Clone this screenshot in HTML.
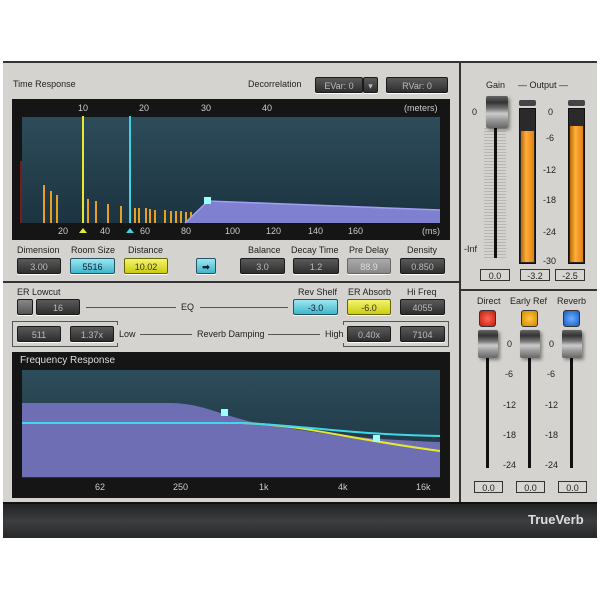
<!DOCTYPE html>
<html><head><meta charset="utf-8"><style>
body{margin:0;width:600px;height:600px;background:#fff;position:relative;overflow:hidden;font-family:"Liberation Sans",sans-serif;}
.a{position:absolute}
.t{position:absolute;font-size:9px;color:#222;white-space:nowrap}
.b{position:absolute;height:16px;border-radius:2px;background:linear-gradient(#5a5a5a,#2e2e2e);border:1px solid #1a1a1a;color:#bbb;font-size:9px;text-align:center;line-height:16px;box-sizing:border-box;box-shadow:0 1px 0 #fff}
.cy{background:linear-gradient(#9ee6f2,#3fb6cc);color:#123;border-color:#256}
.ye{background:linear-gradient(#f4f470,#cccc10);color:#332;border-color:#660}
.gr{background:linear-gradient(#aaa,#888);color:#ddd;border-color:#666}
.v{position:absolute;height:12px;border:1px solid #333;background:#d8d6d2;font-size:9px;text-align:center;line-height:12px;box-sizing:border-box;color:#222}
.ln{position:absolute;height:1px;background:#555}
.sc{position:absolute;font-size:9px;color:#222}
.knob{position:absolute;width:20px;height:28px;border-radius:2px;background:linear-gradient(#666 0,#333 20%,#777 40%,#ccc 55%,#999 75%,#666 100%);box-shadow:2px 2px 3px rgba(0,0,0,.4)}
.trk{position:absolute;width:3px;background:#111}
</style></head><body>
<div class="a" style="left:3px;top:61px;width:594px;height:477px;background:#d5d3cf;border-top:2px solid #333;box-sizing:border-box"></div>
<div class="a" style="left:459px;top:61px;width:2px;height:443px;background:#333"></div>
<div class="a" style="left:3px;top:281px;width:456px;height:2px;background:#333"></div>
<div class="a" style="left:461px;top:289px;width:136px;height:2px;background:#333"></div>
<div class="a" style="left:3px;top:502px;width:594px;height:36px;background:linear-gradient(#222,#3c3e40 50%,#26282a);border-top:2px solid #111;box-sizing:border-box"></div>
<div class="a" style="left:528px;top:512px;font-size:13px;font-weight:bold;color:#ddd">TrueVerb</div>

<div class="t" style="left:13px;top:79px">Time Response</div>
<div class="t" style="left:248px;top:79px">Decorrelation</div>
<div class="b" style="left:315px;top:77px;width:48px">EVar: 0</div>
<div class="b" style="left:363px;top:77px;width:15px">▾</div>
<div class="b" style="left:386px;top:77px;width:62px">RVar: 0</div>

<svg class="a" style="left:12px;top:99px" width="438" height="141">
<rect width="438" height="141" fill="#151515"/>
<defs><linearGradient id="g1" x1="0" y1="0" x2="0" y2="1"><stop offset="0" stop-color="#2d4c5a"/><stop offset="1" stop-color="#1c3340"/></linearGradient></defs>
<rect x="10" y="18" width="418" height="106" fill="url(#g1)"/>
<rect x="8" y="62" width="2" height="62" fill="#7a1a1a"/>
<g fill="#e8a020">
<rect x="31" y="86" width="2" height="38"/><rect x="38" y="92" width="2" height="32"/><rect x="44" y="96" width="2" height="28"/><rect x="75" y="100" width="2" height="24"/><rect x="83" y="102" width="2" height="22"/><rect x="95" y="105" width="2" height="19"/><rect x="108" y="107" width="2" height="17"/><rect x="122" y="109" width="2" height="15"/><rect x="126" y="109" width="2" height="15"/><rect x="133" y="109" width="2" height="15"/><rect x="137" y="110" width="2" height="14"/><rect x="142" y="111" width="2" height="13"/><rect x="152" y="111" width="2" height="13"/><rect x="158" y="112" width="2" height="12"/><rect x="163" y="112" width="2" height="12"/><rect x="168" y="112" width="2" height="12"/><rect x="173" y="113" width="2" height="11"/><rect x="178" y="113" width="2" height="11"/></g>
<rect x="70" y="17" width="2" height="107" fill="#e8e830"/>
<rect x="117" y="17" width="2" height="107" fill="#40d0e0"/>
<polygon points="173,124 196,102 428,111 428,124" fill="#8080d0"/>
<polyline points="173,124 196,102 428,111" fill="none" stroke="#a0a0f0" stroke-width="1.5"/>
<rect x="192" y="98" width="7" height="7" fill="#9ff"/>
<g fill="#ccc" font-size="9" font-family="Liberation Sans">
<text x="66" y="12">10</text><text x="127" y="12">20</text><text x="189" y="12">30</text><text x="250" y="12">40</text><text x="392" y="12">(meters)</text>
<text x="46" y="135">20</text><text x="88" y="135">40</text><text x="128" y="135">60</text><text x="169" y="135">80</text><text x="213" y="135">100</text><text x="254" y="135">120</text><text x="296" y="135">140</text><text x="336" y="135">160</text><text x="410" y="135">(ms)</text></g>
<polygon points="67,134 71,129 75,134" fill="#e8e830"/><polygon points="114,134 118,129 122,134" fill="#40d0e0"/>
</svg>

<div class="t" style="left:17px;top:245px">Dimension</div>
<div class="t" style="left:71px;top:245px">Room Size</div>
<div class="t" style="left:128px;top:245px">Distance</div>
<div class="t" style="left:248px;top:245px">Balance</div>
<div class="t" style="left:291px;top:245px">Decay Time</div>
<div class="t" style="left:349px;top:245px">Pre Delay</div>
<div class="t" style="left:407px;top:245px">Density</div>
<div class="b" style="left:17px;top:258px;width:44px">3.00</div>
<div class="b cy" style="left:70px;top:258px;width:45px">5516</div>
<div class="b ye" style="left:124px;top:258px;width:44px">10.02</div>
<div class="b cy" style="left:196px;top:258px;width:20px;font-weight:bold">➡</div>
<div class="b" style="left:240px;top:258px;width:45px">3.0</div>
<div class="b" style="left:293px;top:258px;width:46px">1.2</div>
<div class="b gr" style="left:347px;top:258px;width:44px">88.9</div>
<div class="b" style="left:400px;top:258px;width:45px">0.850</div>

<div class="t" style="left:17px;top:287px">ER Lowcut</div>
<div class="b" style="left:17px;top:299px;width:16px;background:linear-gradient(#888,#555)"></div>
<div class="b" style="left:36px;top:299px;width:44px">16</div>
<div class="ln" style="left:86px;top:307px;width:90px"></div>
<div class="t" style="left:181px;top:302px">EQ</div>
<div class="ln" style="left:200px;top:307px;width:88px"></div>
<div class="t" style="left:298px;top:287px">Rev Shelf</div>
<div class="t" style="left:348px;top:287px">ER Absorb</div>
<div class="t" style="left:407px;top:287px">Hi Freq</div>
<div class="b cy" style="left:293px;top:299px;width:45px">-3.0</div>
<div class="b ye" style="left:347px;top:299px;width:44px">-6.0</div>
<div class="b" style="left:400px;top:299px;width:45px">4055</div>

<div class="a" style="left:12px;top:321px;width:106px;height:26px;border:1px solid #555;border-left-width:1px;box-sizing:border-box;border-right:none"></div>
<div class="a" style="left:117px;top:321px;width:1px;height:4px;background:#555"></div><div class="a" style="left:117px;top:343px;width:1px;height:4px;background:#555"></div>
<div class="a" style="left:343px;top:321px;width:106px;height:26px;border:1px solid #555;box-sizing:border-box;border-left:none"></div>
<div class="a" style="left:343px;top:321px;width:1px;height:4px;background:#555"></div><div class="a" style="left:343px;top:343px;width:1px;height:4px;background:#555"></div>
<div class="b" style="left:17px;top:326px;width:44px">511</div>
<div class="b" style="left:70px;top:326px;width:44px">1.37x</div>
<div class="t" style="left:119px;top:329px">Low</div>
<div class="ln" style="left:140px;top:334px;width:52px"></div>
<div class="t" style="left:197px;top:329px">Reverb Damping</div>
<div class="ln" style="left:268px;top:334px;width:52px"></div>
<div class="t" style="left:325px;top:329px">High</div>
<div class="b" style="left:347px;top:326px;width:44px">0.40x</div>
<div class="b" style="left:400px;top:326px;width:45px">7104</div>

<svg class="a" style="left:12px;top:352px" width="438" height="146">
<rect width="438" height="146" fill="#151515"/>
<defs><linearGradient id="g2" x1="0" y1="0" x2="0" y2="1"><stop offset="0" stop-color="#2d4c5a"/><stop offset="1" stop-color="#1c3340"/></linearGradient></defs>
<rect x="10" y="18" width="418" height="108" fill="url(#g2)"/>
<path d="M10,51 L160,51 C190,52 200,60 240,70 C300,80 330,86 428,90 L428,125 L10,125 Z" fill="#6e6eb4"/>
<path d="M10,71 L230,71 C300,74 330,86 428,99" fill="none" stroke="#e8e830" stroke-width="2"/>
<path d="M10,71 L230,71 C300,74 330,82 428,84" fill="none" stroke="#40d8e8" stroke-width="2"/>
<rect x="209" y="57" width="7" height="7" fill="#9ff"/>
<rect x="361" y="83" width="7" height="7" fill="#9ff"/>
<g fill="#ccc" font-size="9" font-family="Liberation Sans">
<text x="8" y="11" fill="#ddd" font-size="10">Frequency Response</text>
<text x="83" y="138">62</text><text x="161" y="138">250</text><text x="247" y="138">1k</text><text x="326" y="138">4k</text><text x="404" y="138">16k</text></g>
</svg>

<!-- right top -->
<div class="t" style="left:486px;top:80px">Gain</div>
<div class="t" style="left:518px;top:80px">— Output —</div>
<div class="a" style="left:484px;top:128px;width:22px;height:132px;background:repeating-linear-gradient(#999 0 1px,transparent 1px 3px);opacity:.5"></div>
<div class="trk" style="left:494px;top:128px;height:130px"></div>
<div class="knob" style="left:486px;top:96px;width:22px;height:32px"></div>
<div class="sc" style="left:472px;top:107px">0</div>
<div class="sc" style="left:464px;top:244px">-Inf</div>
<div class="a" style="left:519px;top:100px;width:17px;height:6px;background:#444;border-radius:2px"></div>
<div class="a" style="left:568px;top:100px;width:17px;height:6px;background:#444;border-radius:2px"></div>
<div class="a" style="left:519px;top:108px;width:17px;height:156px;background:#2a2a2a;border:1px solid #111;box-sizing:border-box"></div>
<div class="a" style="left:521px;top:131px;width:13px;height:131px;background:linear-gradient(90deg,#c06a00,#ffae40 40%,#e08010)"></div>
<div class="a" style="left:568px;top:108px;width:17px;height:156px;background:#2a2a2a;border:1px solid #111;box-sizing:border-box"></div>
<div class="a" style="left:570px;top:126px;width:13px;height:136px;background:linear-gradient(90deg,#c06a00,#ffae40 40%,#e08010)"></div>
<div class="sc" style="left:548px;top:107px">0</div>
<div class="sc" style="left:546px;top:133px">-6</div>
<div class="sc" style="left:543px;top:165px">-12</div>
<div class="sc" style="left:543px;top:195px">-18</div>
<div class="sc" style="left:543px;top:227px">-24</div>
<div class="sc" style="left:543px;top:256px">-30</div>
<div class="v" style="left:480px;top:269px;width:30px">0.0</div>
<div class="v" style="left:520px;top:269px;width:30px">-3.2</div>
<div class="v" style="left:555px;top:269px;width:30px">-2.5</div>

<!-- right bottom -->
<div class="t" style="left:477px;top:296px">Direct</div>
<div class="t" style="left:510px;top:296px">Early Ref</div>
<div class="t" style="left:557px;top:296px">Reverb</div>
<div class="a" style="left:479px;top:310px;width:17px;height:17px;border-radius:3px;background:radial-gradient(#ff6a50,#c01a10);border:1px solid #333;box-sizing:border-box"></div>
<div class="a" style="left:521px;top:310px;width:17px;height:17px;border-radius:3px;background:radial-gradient(#ffc840,#d08800);border:1px solid #333;box-sizing:border-box"></div>
<div class="a" style="left:563px;top:310px;width:17px;height:17px;border-radius:3px;background:radial-gradient(#6ab0ff,#1a5ac0);border:1px solid #333;box-sizing:border-box"></div>
<div class="trk" style="left:486px;top:358px;height:110px"></div>
<div class="trk" style="left:528px;top:358px;height:110px"></div>
<div class="trk" style="left:570px;top:358px;height:110px"></div>
<div class="knob" style="left:478px;top:330px"></div>
<div class="knob" style="left:520px;top:330px"></div>
<div class="knob" style="left:562px;top:330px"></div>
<div class="sc" style="left:507px;top:339px">0</div><div class="sc" style="left:549px;top:339px">0</div>
<div class="sc" style="left:505px;top:369px">-6</div><div class="sc" style="left:547px;top:369px">-6</div>
<div class="sc" style="left:503px;top:400px">-12</div><div class="sc" style="left:545px;top:400px">-12</div>
<div class="sc" style="left:503px;top:430px">-18</div><div class="sc" style="left:545px;top:430px">-18</div>
<div class="sc" style="left:503px;top:460px">-24</div><div class="sc" style="left:545px;top:460px">-24</div>
<div class="v" style="left:474px;top:481px;width:29px">0.0</div>
<div class="v" style="left:516px;top:481px;width:29px">0.0</div>
<div class="v" style="left:558px;top:481px;width:29px">0.0</div>
</body></html>
